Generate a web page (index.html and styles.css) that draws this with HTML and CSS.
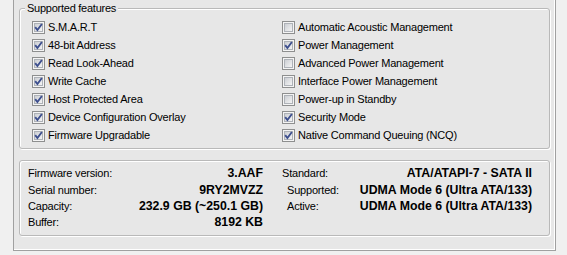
FILE: index.html
```html
<!DOCTYPE html>
<html>
<head>
<meta charset="utf-8">
<link rel="stylesheet" href="styles.css">
</head>
<body>
<svg class="defs" width="0" height="0" aria-hidden="true">
  <defs>
    <linearGradient id="cbg" x1="0" y1="0" x2="1" y2="1">
      <stop offset="0" stop-color="#c9ccd1"/>
      <stop offset="1" stop-color="#f7f7f7"/>
    </linearGradient>
    <symbol id="cb-off" viewBox="0 0 13 13">
      <rect x="0.5" y="0.5" width="12" height="12" fill="#f4f4f4" stroke="#8e8f8f"/>
      <rect x="2.5" y="2.5" width="8" height="8" fill="url(#cbg)" stroke="#aeb2b8"/>
    </symbol>
    <symbol id="cb-on" viewBox="0 0 13 13">
      <rect x="0.5" y="0.5" width="12" height="12" fill="#f4f4f4" stroke="#8e8f8f"/>
      <rect x="2.5" y="2.5" width="8" height="8" fill="url(#cbg)" stroke="#aeb2b8"/>
      <path d="M3.2 6.2 L5.4 9 L9.9 3" stroke="#3d4f8e" stroke-width="1.9" fill="none"/>
    </symbol>
  </defs>
</svg>
<div class="panel">
  <div class="group features">
    <div class="legend">Supported features</div>
    <div class="cols">
      <div class="col">
        <div class="cb"><svg class="box"><use href="#cb-on"/></svg><span>S.M.A.R.T</span></div>
        <div class="cb"><svg class="box"><use href="#cb-on"/></svg><span>48-bit Address</span></div>
        <div class="cb"><svg class="box"><use href="#cb-on"/></svg><span>Read Look-Ahead</span></div>
        <div class="cb"><svg class="box"><use href="#cb-on"/></svg><span>Write Cache</span></div>
        <div class="cb"><svg class="box"><use href="#cb-on"/></svg><span>Host Protected Area</span></div>
        <div class="cb"><svg class="box"><use href="#cb-on"/></svg><span>Device Configuration Overlay</span></div>
        <div class="cb"><svg class="box"><use href="#cb-on"/></svg><span>Firmware Upgradable</span></div>
      </div>
      <div class="col">
        <div class="cb"><svg class="box"><use href="#cb-off"/></svg><span>Automatic Acoustic Management</span></div>
        <div class="cb"><svg class="box"><use href="#cb-on"/></svg><span>Power Management</span></div>
        <div class="cb"><svg class="box"><use href="#cb-off"/></svg><span>Advanced Power Management</span></div>
        <div class="cb"><svg class="box"><use href="#cb-off"/></svg><span>Interface Power Management</span></div>
        <div class="cb"><svg class="box"><use href="#cb-off"/></svg><span>Power-up in Standby</span></div>
        <div class="cb"><svg class="box"><use href="#cb-on"/></svg><span>Security Mode</span></div>
        <div class="cb"><svg class="box"><use href="#cb-on"/></svg><span>Native Command Queuing (NCQ)</span></div>
      </div>
    </div>
  </div>
  <div class="group info">
    <div class="info-col left">
      <div class="row first"><span class="lbl">Firmware version:</span><span class="val">3.AAF</span></div>
      <div class="row"><span class="lbl">Serial number:</span><span class="val">9RY2MVZZ</span></div>
      <div class="row"><span class="lbl">Capacity:</span><span class="val">232.9 GB (~250.1 GB)</span></div>
      <div class="row"><span class="lbl">Buffer:</span><span class="val">8192 KB</span></div>
    </div>
    <div class="info-col right">
      <div class="row first"><span class="lbl">Standard:</span><span class="val">ATA/ATAPI-7 - SATA II</span></div>
      <div class="row sub"><span class="lbl">Supported:</span><span class="val">UDMA Mode 6 (Ultra ATA/133)</span></div>
      <div class="row sub"><span class="lbl">Active:</span><span class="val">UDMA Mode 6 (Ultra ATA/133)</span></div>
    </div>
  </div>
</div>
</body>
</html>
```

FILE: styles.css
```css
html, body {
  margin: 0;
  padding: 0;
}
body {
  background: #f0f0f0;
  font-family: "Liberation Sans", Arial, sans-serif;
  font-size: 11px;
  color: #000;
  width: 567px;
  height: 255px;
  overflow: hidden;
}
.defs {
  position: absolute;
  width: 0;
  height: 0;
}
.panel {
  box-sizing: border-box;
  margin-left: 13px;
  width: 543px;
  height: 251px;
  background: #e7e7e7;
  border-left: 1px solid #a0a0a0;
  border-right: 1px solid #a0a0a0;
  border-bottom: 1px solid #a0a0a0;
  box-shadow: inset -1px 0 0 #ffffff, inset 0 -1px 0 #ffffff;
  padding: 8px 4px 0 5px;
}
.group {
  position: relative;
  box-sizing: border-box;
  width: 531px;
  border: 1px solid #b9b9b9;
  border-radius: 3px;
  box-shadow: 1px 1px 0 #ffffff, inset 1px 1px 0 #ffffff;
}
.legend {
  position: absolute;
  top: -8px;
  left: 5px;
  padding: 0 2px;
  background: #e7e7e7;
  line-height: 14px;
  letter-spacing: -0.25px;
}
.features {
  height: 141px;
  padding: 9px 0 0 12px;
}
.cols {
  display: grid;
  grid-template-columns: 250px 1fr;
}
.cb {
  display: flex;
  align-items: center;
  height: 18px;
  letter-spacing: -0.2px;
}
.box {
  width: 13px;
  height: 13px;
  flex: none;
  margin-right: 3px;
}
.info {
  margin-top: 11px;
  height: 76px;
  padding: 3px 0 0 8px;
  display: flex;
}
.info-col {
  display: flex;
  flex-direction: column;
}
.info-col.left {
  width: 235px;
}
.info-col.right {
  margin-left: 19px;
  width: 250px;
}
.row {
  display: flex;
  justify-content: space-between;
  align-items: center;
  height: 16px;
}
.row.first {
  height: 18px;
}
.row.sub {
  padding-left: 5px;
}
.lbl {
  letter-spacing: -0.2px;
}
.val {
  font-weight: bold;
  font-size: 12.3px;
}
```
